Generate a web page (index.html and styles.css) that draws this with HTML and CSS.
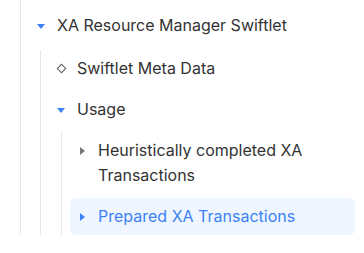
FILE: index.html
```html
<!DOCTYPE html>
<html lang="en">
<head>
    <meta charset="UTF-8">
    <meta name="viewport" content="width=device-width, initial-scale=1.0">
    <title>Swiftlet tree</title>
    <link rel="stylesheet" href="styles.css">
</head>
<body>
    <div class="tree">
        <div class="branch level0">
            <div class="node">
                <span class="icon"><span class="caret down"></span></span>
                <span class="label">XA Resource Manager Swiftlet</span>
            </div>
            <div class="branch level1">
                <div class="node">
                    <span class="icon"><span class="diamond"></span></span>
                    <span class="label">Swiftlet Meta Data</span>
                </div>
                <div class="node">
                    <span class="icon"><span class="caret down"></span></span>
                    <span class="label">Usage</span>
                </div>
                <div class="branch level2">
                    <div class="node">
                        <span class="icon"><span class="caret right"></span></span>
                        <span class="label">Heuristically completed XA Transactions</span>
                    </div>
                    <div class="node active">
                        <span class="icon"><span class="caret right"></span></span>
                        <span class="label">Prepared XA Transactions</span>
                    </div>
                </div>
            </div>
        </div>
    </div>
</body>
</html>
```
FILE: styles.css
```css
body {
    margin: 0;
    background: #fff;
    font-family: Inter, "Noto Sans", sans-serif;
    font-size: 16px;
    color: #333;
}
.tree {
    padding-left: 20px;
    width: 335px;
}
.branch {
    border-left: 1px solid #e6e6e6;
    padding-left: 8px;
    display: flex;
    flex-direction: column;
    gap: 4px;
}
.level0 {
    padding-top: 7px;
}
.level1 {
    margin-left: 11px;
    margin-top: 2px;
}
.level2 {
    margin-left: 12px;
}
.node {
    display: flex;
    align-items: flex-start;
    padding: 6px 8px;
    line-height: 25px;
    border-radius: 6px;
}
.icon {
    flex: 0 0 8px;
    height: 25px;
    margin-right: 12px;
    display: flex;
    align-items: center;
    justify-content: center;
}
.caret {
    width: 0;
    height: 0;
}
.caret.down {
    border-left: 4px solid transparent;
    border-right: 4px solid transparent;
    border-top: 5px solid #3b82f6;
    margin-top: 1px;
}
.caret.right {
    border-top: 4px solid transparent;
    border-bottom: 4px solid transparent;
    border-left: 5px solid #777;
}
.diamond {
    width: 5px;
    height: 5px;
    border: 1.5px solid #555;
    transform: rotate(45deg);
}
.active {
    background: #eff6ff;
    color: #3b82f6;
}
.active .caret.right {
    border-left-color: #3b82f6;
}
```
